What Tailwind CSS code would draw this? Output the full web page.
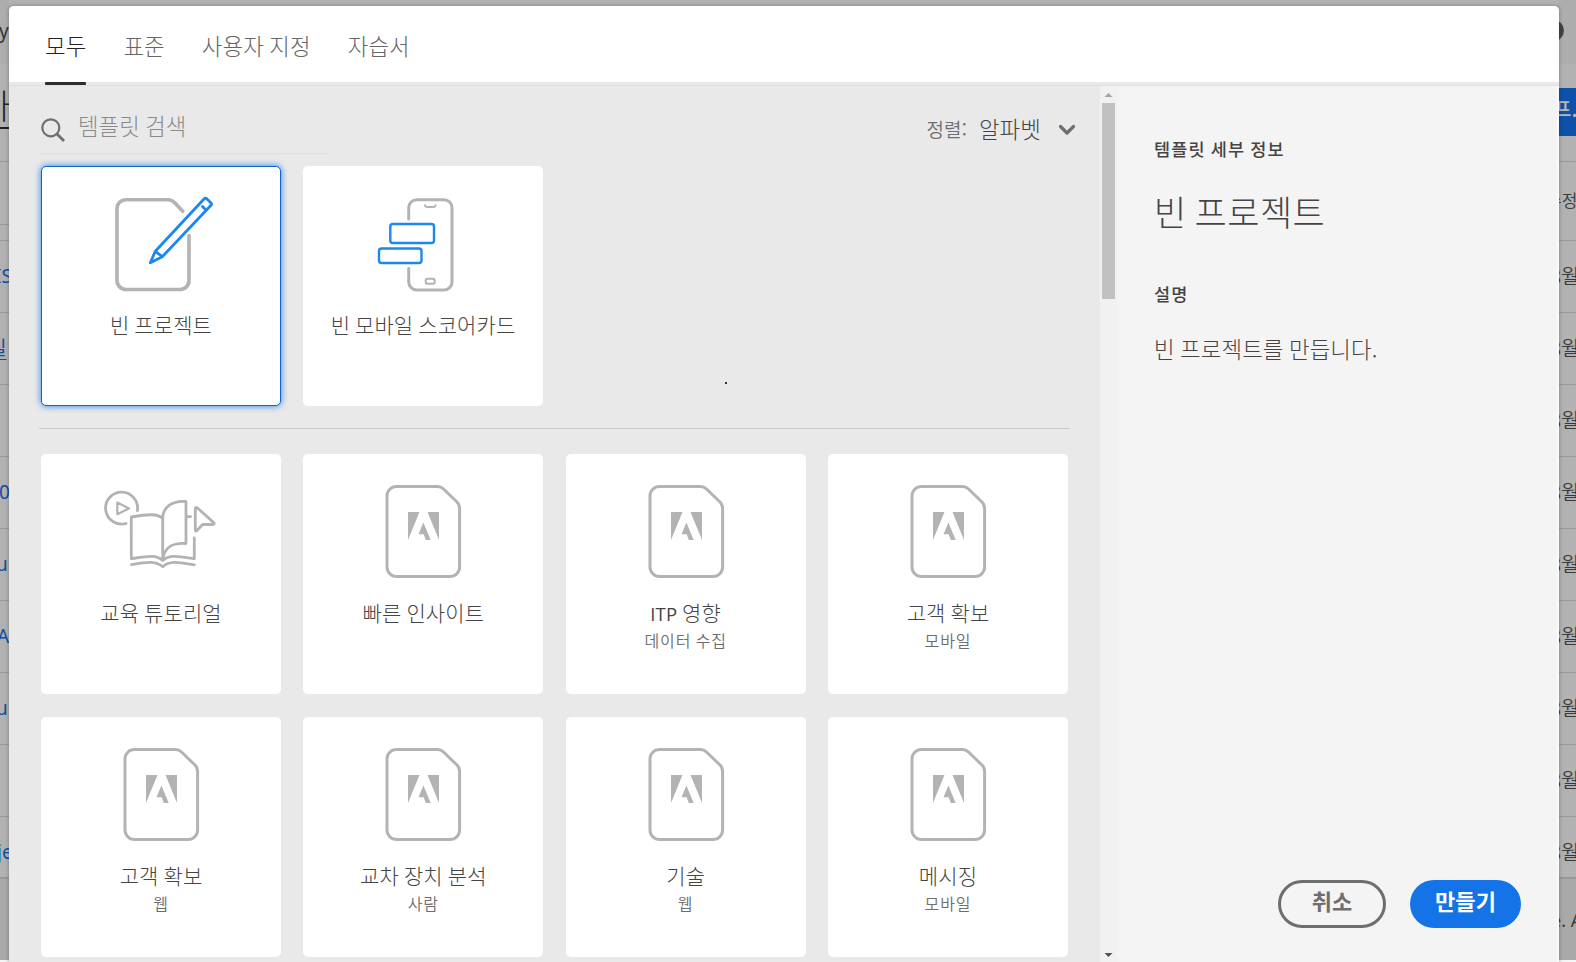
<!DOCTYPE html>
<html lang="ko">
<head>
<meta charset="utf-8">
<title>템플릿</title>
<script src="https://cdn.jsdelivr.net/npm/@tailwindcss/browser@4"></script>
</head>
<body class="relative h-[962px] w-[1576px] overflow-hidden bg-[#f5f5f5] font-['Noto_Sans_CJK_KR',sans-serif] font-light">
<svg class="hidden">
  <symbol id="doc" viewBox="0 0 240 130">
    <path d="M93 32.500H134.500q3.500 0 6 2.500L154 48q2.600 2.600 2.600 6.500V113a9.500 9.500 0 0 1-9.500 9.500H93.500a9.500 9.500 0 0 1-9.500-9.500V42a9.500 9.500 0 0 1 9.500-9.500Z" fill="none" stroke="#b3b3b3" stroke-width="3"/>
    <path d="M105 58H116.500L105 86ZM136 58H124.500L136 86ZM120.400 68.500L127.700 86H122.800L120.700 80.300H115.500Z" fill="#b3b3b3"/>
  </symbol>
</svg>

<!-- page behind the dialog -->
<div class="flex h-[960px] justify-between bg-[#b2b2b2] text-[#333]">
  <div class="flex w-[9px] flex-col overflow-hidden whitespace-nowrap font-['Noto_Sans','Noto_Sans_CJK_KR',sans-serif] text-[19px] font-normal text-[#0d4ea6]">
    <div class="h-16 shrink-0 bg-[#adadad] leading-[62px] text-[#333]"><span class="-ml-[1px]">y</span></div>
    <div class="flex h-[65px] shrink-0 items-center border-b-2 border-[#222] pt-5 text-[34px] font-light leading-none text-[#222]"><span class="-ml-[20px]">바</span></div>
    <div class="h-[33px] shrink-0 border-b border-[#999]"></div>
    <div class="h-[63px] shrink-0 border-b border-[#999]"></div>
    <div class="h-[16px] shrink-0 border-b border-[#999]"></div>
    <div class="h-[72px] shrink-0 border-b border-[#999] leading-[71px]"><span class="-ml-[5px]">IS</span></div>
    <div class="h-[72px] shrink-0 border-b border-[#999] leading-[70px]"><span class="-ml-[11px] underline underline-offset-4">빌</span></div>
    <div class="h-[72px] shrink-0 border-b border-[#999]"></div>
    <div class="h-[72px] shrink-0 border-b border-[#999] leading-[71px]"><span class="-ml-[1px]">0</span></div>
    <div class="h-[72px] shrink-0 border-b border-[#999] leading-[71px]"><span class="-ml-[4px]">u</span></div>
    <div class="h-[72px] shrink-0 border-b border-[#999] leading-[71px]"><span class="-ml-[3px]">A</span></div>
    <div class="h-[72px] shrink-0 border-b border-[#999] leading-[71px]"><span class="-ml-[4px]">u</span></div>
    <div class="h-[72px] shrink-0 border-b border-[#999]"></div>
    <div class="h-[62px] shrink-0 border-b-2 border-[#999] leading-[71px]"><span class="-ml-[3px]">je</span></div>
    <div class="flex-1 bg-[#a9a9a9]"></div>
  </div>
  <div class="flex w-[18px] flex-col overflow-hidden whitespace-nowrap text-[20px] font-[350] text-[#3a3a3a]">
    <div class="flex h-16 shrink-0 items-center bg-[#adadad] pb-1"><div class="-ml-[15px] size-[21px] shrink-0 rounded-full bg-[#444]"></div></div>
    <div class="h-6 shrink-0"></div>
    <div class="h-[48px] shrink-0 bg-[#0d51a8] text-[20px] font-medium leading-[42px] text-[#b8b8b8]"><span class="-ml-[5px]">프...</span></div>
    <div class="h-[26px] shrink-0 border-b border-[#999]"></div>
    <div class="h-[79px] shrink-0 border-b border-[#999] text-[17px] leading-[75px]"><span class="-ml-[12px]">수정</span></div>
    <div class="h-[72px] shrink-0 border-b border-[#999] leading-[69px]"><span class="-ml-[8px]">8월</span></div>
    <div class="h-[72px] shrink-0 border-b border-[#999] leading-[69px]"><span class="-ml-[8px]">8월</span></div>
    <div class="h-[72px] shrink-0 border-b border-[#999] leading-[69px]"><span class="-ml-[8px]">8월</span></div>
    <div class="h-[72px] shrink-0 border-b border-[#999] leading-[69px]"><span class="-ml-[8px]">8월</span></div>
    <div class="h-[72px] shrink-0 border-b border-[#999] leading-[69px]"><span class="-ml-[8px]">8월</span></div>
    <div class="h-[72px] shrink-0 border-b border-[#999] leading-[69px]"><span class="-ml-[8px]">8월</span></div>
    <div class="h-[72px] shrink-0 border-b border-[#999] leading-[69px]"><span class="-ml-[8px]">8월</span></div>
    <div class="h-[72px] shrink-0 border-b border-[#999] leading-[69px]"><span class="-ml-[8px]">8월</span></div>
    <div class="h-[62px] shrink-0 border-b-2 border-[#999] leading-[69px]"><span class="-ml-[8px]">8월</span></div>
    <div class="flex-1 bg-[#a9a9a9] font-['Noto_Sans',sans-serif] text-[18px] font-normal leading-[82px]"><span class="-ml-[7px]">e. A</span></div>
  </div>
</div>

<!-- dialog -->
<div class="absolute left-[9px] top-[6px] flex h-[970px] w-[1550px] flex-col overflow-hidden rounded-t-[5px] bg-[#e9e9e9] tracking-[0.1px] text-[#444] shadow-[0_0_4px_rgba(0,0,0,0.3)] [word-spacing:-1px]">
  <nav class="flex h-[76px] shrink-0 gap-[37px] bg-white pl-9 text-[22.400px] leading-[78px] text-[#666]">
    <div class="relative text-[#222]">모두<div class="absolute inset-x-0 top-[76px] z-10 h-[3px] rounded-[1px] bg-[#2c2c2c]"></div></div>
    <div>표준</div>
    <div>사용자 지정</div>
    <div>자습서</div>
  </nav>
  <div class="h-1 shrink-0 border-b border-[#e0e0e0]"></div>
  <div class="flex h-[876px] shrink-0">
    <main class="relative flex h-[876px] w-[1091px] flex-col pl-[30px] pr-[30px]">
      <div class="flex h-20 shrink-0 justify-between pl-[2px]">
        <div class="flex h-[68px] w-[288px] items-center border-b border-[#dfdfdf]">
          <svg class="mt-[21px] h-6 w-6" viewBox="0 0 24 24" fill="none" stroke="#6e6e6e"><circle cx="9.800" cy="9.800" r="8.500" stroke-width="2.200"/><path d="M16 16l7 7" stroke-width="2.800"/></svg>
          <span class="ml-[13px] mt-[11px] text-[22.300px] leading-8 text-[#8a8a8a]">템플릿 검색</span>
        </div>
        <div class="mr-[-6px] flex h-[68px] items-center pt-[18px]">
          <span class="text-[19px] font-[350] leading-8 text-[#6e6e6e]">정렬:</span>
          <span class="-mt-[3px] ml-3 text-[22.400px] leading-8">알파벳</span>
          <svg class="ml-[17px] mt-px h-[12px] w-[18px]" viewBox="0 0 18 12"><path d="M2.500 2.500L9 9L15.500 2.500" fill="none" stroke="#6e6e6e" stroke-width="3.200" stroke-linecap="round" stroke-linejoin="round"/></svg>
        </div>
      </div>
      <div class="flex h-60 shrink-0 gap-[22px] pl-[2px] text-center text-[21px] leading-8">
        <section class="w-60 rounded-[5px] border border-[#0d66d0] bg-white shadow-[0_0_7px_#2680eb]">
          <svg class="-ml-px -mt-px h-[130px] w-60" viewBox="0 0 240 130" fill="none" stroke-linecap="round" stroke-linejoin="round">
            <path d="M141.700 45.300L134 37q-3-3.300-7-3.300H85a9 9 0 0 0-9 9V114.500a9 9 0 0 0 9 9H139a9 9 0 0 0 9-9V69.500" stroke="#b3b3b3" stroke-width="3.600"/>
            <path d="M109.300 96.800L114.300 85.300L163 33q1.500-1.500 3 0L170 37q1.200 1.200 0 2.300L121.300 90.700ZM114.300 85.300L121.300 90.700M161.500 40.500L164.500 43.500" stroke="#1b87f3" stroke-width="2.800"/>
          </svg>
          <div class="mt-[12px]">빈 프로젝트</div>
        </section>
        <section class="w-60 rounded-[5px] bg-white">
          <svg class="h-[130px] w-60" viewBox="0 0 240 130" fill="none" stroke-linecap="round" stroke-linejoin="round">
            <path d="M105.700 53V41.700a8 8 0 0 1 8-8H141a8 8 0 0 1 8 8V116a8 8 0 0 1-8 8H113.700a8 8 0 0 1-8-8V102.300" stroke="#b3b3b3" stroke-width="3"/>
            <path d="M122 39.200q.2 1.800 1.500 1.800h7.500q1.300 0 1.500-1.800" stroke="#b3b3b3" stroke-width="2"/>
            <rect x="122.700" y="112.700" width="9" height="5" rx="1.800" stroke="#b3b3b3" stroke-width="2"/>
            <rect x="87.300" y="58" width="43.700" height="19" rx="2.500" stroke="#1b87f3" stroke-width="2.400"/>
            <rect x="76" y="82.500" width="42.500" height="14.500" rx="2.500" stroke="#1b87f3" stroke-width="2.400"/>
          </svg>
          <div class="mt-[12px]">빈 모바일 스코어카드</div>
        </section>
      </div>
      <div class="mt-[22px] h-px w-[1031px] shrink-0 bg-[#c8c8c8]"></div>
      <div class="mt-[25px] grid w-[1029px] shrink-0 grid-cols-[repeat(4,240px)] justify-between gap-y-[23px] pl-[2px] text-center">
        <section class="h-60 rounded-[5px] bg-white">
          <svg class="h-[130px] w-60" viewBox="0 0 240 130" fill="none" stroke="#b3b3b3" stroke-width="2.800" stroke-linecap="round" stroke-linejoin="round">
            <path d="M96.400 56.600A16 16 0 1 0 85 69.500"/>
            <path d="M76.300 48.500V60.300L88 54.500Z" stroke-width="2.200"/>
            <path d="M121.700 64.500C117 59.500 108 60 90.300 63V104.700C108 102 115 100.500 121.700 106.500C128 100.500 136 102 153.300 104.700V84M121.700 64.500V106.500C123 94 130 88.500 145 89.500V47.500C130 46.500 121.700 54 121.700 64.500M145.500 62.700H149.500M90.500 110.700C108 107.500 115 107 121.700 112.700C128 107 136 107.500 153.300 110.900"/>
            <path d="M154.300 54.500V76q.2 2 1.700.5L161.500 70.500H172q2-.4.700-1.900L156.500 54Q154.700 52.500 154.300 54.500Z"/>
          </svg>
          <div class="mt-[12px] text-[21px] leading-8">교육 튜토리얼</div>
        </section>
        <section class="h-60 rounded-[5px] bg-white">
          <svg class="h-[130px] w-60"><use href="#doc"/></svg>
          <div class="mt-[12px] text-[21px] leading-8">빠른 인사이트</div>
        </section>
        <section class="h-60 rounded-[5px] bg-white">
          <svg class="h-[130px] w-60"><use href="#doc"/></svg>
          <div class="mt-[12px] h-8 text-[21px] leading-8"><span class="font-['Open_Sans',sans-serif] text-[18.500px] font-medium leading-none">ITP</span> 영향</div>
          <div class="-mt-1 text-[16px] font-[350] leading-8 tracking-[0.9px] text-[#6e6e6e]">데이터 수집</div>
        </section>
        <section class="h-60 rounded-[5px] bg-white">
          <svg class="h-[130px] w-60"><use href="#doc"/></svg>
          <div class="mt-[12px] text-[21px] leading-8">고객 확보</div>
          <div class="-mt-1 text-[16px] font-[350] leading-8 tracking-[0.9px] text-[#6e6e6e]">모바일</div>
        </section>
        <section class="h-60 rounded-[5px] bg-white">
          <svg class="h-[130px] w-60"><use href="#doc"/></svg>
          <div class="mt-[12px] text-[21px] leading-8">고객 확보</div>
          <div class="-mt-1 text-[16px] font-[350] leading-8 tracking-[0.9px] text-[#6e6e6e]">웹</div>
        </section>
        <section class="h-60 rounded-[5px] bg-white">
          <svg class="h-[130px] w-60"><use href="#doc"/></svg>
          <div class="mt-[12px] text-[21px] leading-8">교차 장치 분석</div>
          <div class="-mt-1 text-[16px] font-[350] leading-8 tracking-[0.9px] text-[#6e6e6e]">사람</div>
        </section>
        <section class="h-60 rounded-[5px] bg-white">
          <svg class="h-[130px] w-60"><use href="#doc"/></svg>
          <div class="mt-[12px] text-[21px] leading-8">기술</div>
          <div class="-mt-1 text-[16px] font-[350] leading-8 tracking-[0.9px] text-[#6e6e6e]">웹</div>
        </section>
        <section class="h-60 rounded-[5px] bg-white">
          <svg class="h-[130px] w-60"><use href="#doc"/></svg>
          <div class="mt-[12px] text-[21px] leading-8">메시징</div>
          <div class="-mt-1 text-[16px] font-[350] leading-8 tracking-[0.9px] text-[#6e6e6e]">모바일</div>
        </section>
      </div>
      <div class="absolute left-[716px] top-[296px] size-[2px] bg-[#333]"></div>
    </main>
    <div class="flex w-[17px] flex-col items-center justify-between bg-[#f1f1f1]">
      <div class="flex flex-col items-center">
        <svg class="h-[17px] w-[17px]" viewBox="0 0 17 17"><path d="M4.500 11L8.500 7L12.500 11Z" fill="#a3a3a3"/></svg>
        <div class="h-[196px] w-[13px] bg-[#c1c1c1]"></div>
      </div>
      <svg class="h-[17px] w-[17px]" viewBox="0 0 17 17"><path d="M4.500 8H12.500L8.500 12Z" fill="#505050"/></svg>
    </div>
    <aside class="flex flex-1 flex-col justify-between border-r-2 border-[#fafafa] bg-[#f4f4f4] pl-[37px]">
      <div>
        <h3 class="mt-[47px] text-[17.500px] font-medium leading-8 tracking-[1.150px]">템플릿 세부 정보</h3>
        <h2 class="mt-[20px] text-[35px] leading-[52px] tracking-[0.5px] [word-spacing:-2.500px]">빈 프로젝트</h2>
        <h3 class="mt-[41px] text-[17.500px] font-medium leading-8 tracking-[1.050px]">설명</h3>
        <p class="mt-[22px] text-[22.400px] leading-8">빈 프로젝트를 만듭니다.</p>
      </div>
      <div class="mb-[34px] mr-[36px] flex justify-end gap-6 text-[22px] font-bold">
        <button class="h-12 w-[108px] rounded-full border-[3px] border-[#6e6e6e] pb-2 leading-[34px] text-[#6e6e6e]">취소</button>
        <button class="h-12 w-[111px] rounded-full bg-[#1473e6] pb-2 leading-[40px] text-white">만들기</button>
      </div>
    </aside>
  </div>
</div>
</body>
</html>
